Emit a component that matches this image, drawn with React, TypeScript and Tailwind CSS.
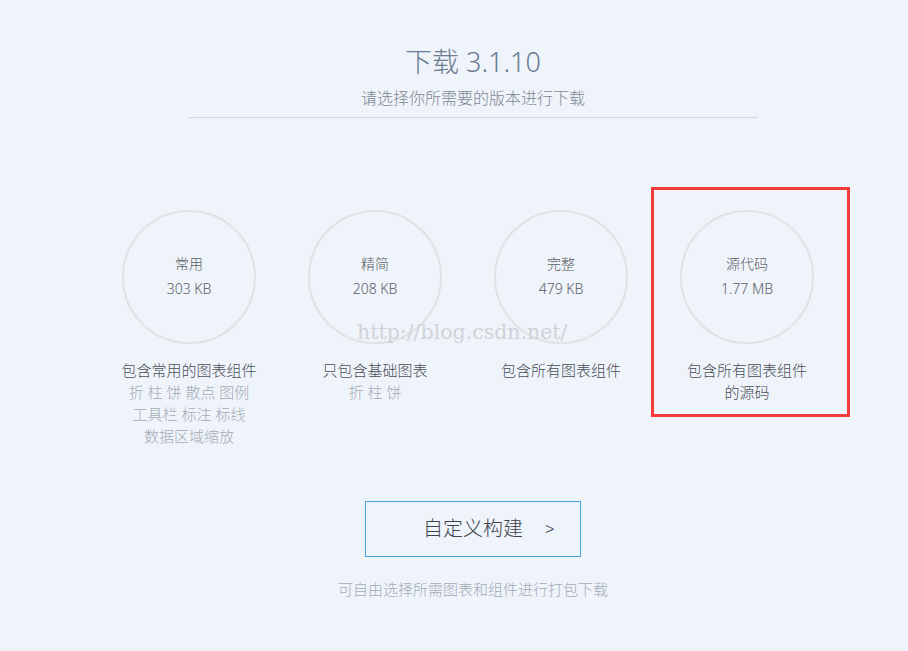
import React from "react";

const cols = [
  { name: "常用", size: "303 KB", lines: ["包含常用的图表组件", "折 柱 饼 散点 图例", "工具栏 标注 标线", "数据区域缩放"] },
  { name: "精简", size: "208 KB", lines: ["只包含基础图表", "折 柱 饼"] },
  { name: "完整", size: "479 KB", lines: ["包含所有图表组件"] },
  { name: "源代码", size: "1.77 MB", lines: ["包含所有图表组件", "的源码"], dark: true },
];

export default function App() {
  return (
    <div
      className="relative w-[908px] h-[651px] overflow-hidden bg-[#eff3fa]"
      style={{ fontFamily: '"Noto Sans", "Noto Sans CJK SC", sans-serif' }}
    >
      <div className="flex flex-col items-center pl-[38px]">
        <div className="mt-[44px] text-[27px] leading-[36px] font-light text-[#6b7d92]">下载 3.1.10</div>
        <div className="mt-[8px] text-[16px] leading-[20px] text-[#7d8793] font-light">请选择你所需要的版本进行下载</div>
        <div className="mt-[9px] w-[570px] h-px bg-[#d3d7dc]" />
      </div>

      <div className="flex ml-[96px] mt-[92px]">
        {cols.map((c) => (
          <div key={c.name} className="w-[186px] flex flex-col items-center">
            <div className="w-[134px] h-[134px] rounded-full border-2 border-[#e0e2e6] flex flex-col items-center justify-center text-[14px] text-[#5a5f66] font-light">
              <div className="leading-[22px] mt-[-2px]">{c.name}</div>
              <div className="leading-[22px] mt-[3px]">{c.size}</div>
            </div>
            <div className="mt-[15px] flex flex-col items-center text-[15px] leading-[22px] font-light">
              {c.lines.map((l, i) => (
                <div key={i} className={i === 0 || c.dark ? "text-[#4a4f56]" : "text-[#a3abb5]"}>
                  {l}
                </div>
              ))}
            </div>
          </div>
        ))}
      </div>

      <div className="flex flex-col items-center pl-[38px]">
        <div className="mt-[54px] w-[216px] h-[56px] border border-[#4aa3df] flex items-center pl-[57px] text-[#3d434a] font-light">
          <span className="text-[20px]">自定义构建</span>
          <span className="text-[17px] ml-[22px]">&gt;</span>
        </div>
        <div className="mt-[21px] text-[15px] leading-[22px] text-[#a3abb5] font-light">可自由选择所需图表和组件进行打包下载</div>
      </div>

      <div
        className="absolute left-[357px] top-[320px] text-[20.5px] leading-[24px] text-[#cfd3d8]"
        style={{ fontFamily: '"DejaVu Serif", "Liberation Serif", serif' }}
      >
        http://blog.csdn.net/
      </div>

      <div className="absolute left-[651px] top-[187px] w-[199px] h-[230px] border-[3px] border-[#f53a3a]" />
    </div>
  );
}
